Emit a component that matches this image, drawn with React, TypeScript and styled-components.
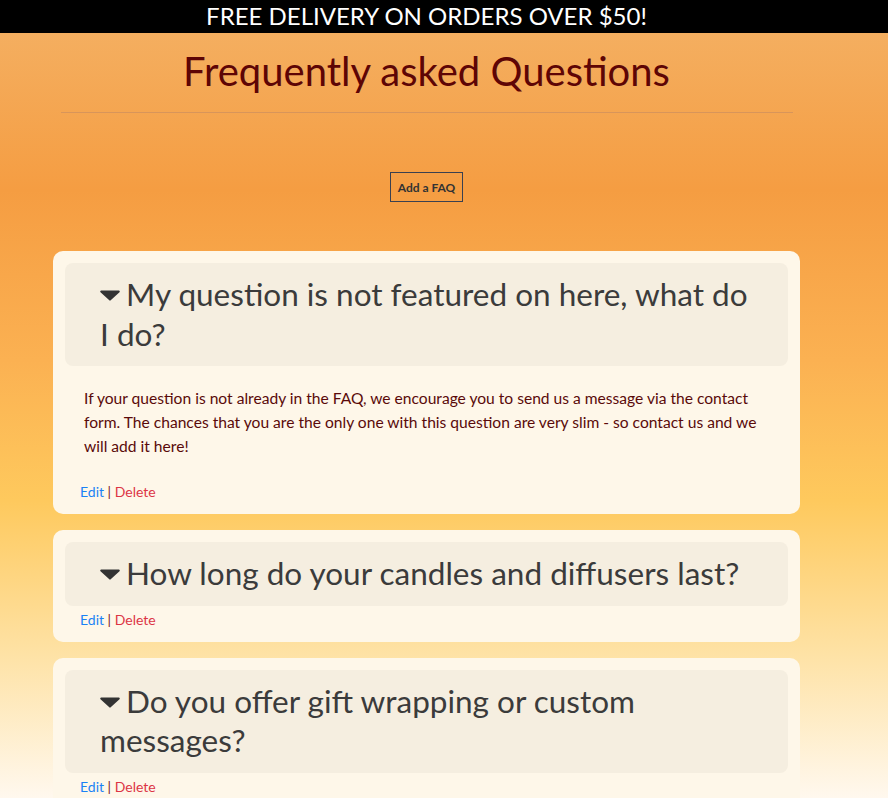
import React from "react";
import styled, { createGlobalStyle } from "styled-components";

const Global = createGlobalStyle`
  html, body { margin: 0; padding: 0; }
  body {
    font-family: Lato, "Noto Sans", sans-serif;
    min-height: 798px;
    background: linear-gradient(180deg, #f4b266 0px, #f59d42 190px, #fbb152 360px, #fec95d 500px, #fee3a8 660px, #fff8ee 798px) fixed;
  }
`;

const Banner = styled.div`
  background: #000;
  color: #fff;
  height: 33px;
  line-height: 31px;
  font-size: 24px;
  text-align: center;
  padding-right: 35px;
`;

const Main = styled.main`
  width: 853px;
  display: flex;
  flex-direction: column;
  align-items: center;
`;

const Title = styled.h1`
  margin: 14px 0 0;
  font-size: 40px;
  font-weight: 400;
  line-height: 48px;
  color: #5e0505;
`;

const Rule = styled.hr`
  align-self: stretch;
  margin: 17px 60px 0 61px;
  border: 0;
  border-top: 1px solid #d8955a;
  height: 0;
`;

const AddButton = styled.button`
  margin-top: 59px;
  width: 73px;
  height: 30px;
  padding: 0;
  border: 1px solid #3a4050;
  background: transparent;
  font-family: Lato, sans-serif;
  font-weight: 700;
  font-size: 12px;
  color: #333;
`;

const List = styled.div`
  margin-top: 49px;
  align-self: stretch;
  padding: 0 53px;
  display: flex;
  flex-direction: column;
  gap: 16px;
`;

const Card = styled.section`
  background: #fef7e9;
  border-radius: 10px;
  padding: 12px;
`;

const Question = styled.h2`
  margin: 0;
  background: #f5eee0;
  border-radius: 8px;
  padding: 12px 35px;
  font-size: 31.5px;
  font-weight: 400;
  line-height: 39.5px;
  color: #3b3b3b;
`;

const Caret = styled.svg`
  width: 20px;
  height: 11px;
  margin: 0 6px 5px 0;
  vertical-align: middle;
`;

const Answer = styled.p`
  margin: 0;
  padding: 20px 19px;
  font-size: 15.6px;
  line-height: 24px;
  color: #5a0a0a;
`;

const Actions = styled.div`
  padding: 3px 0 0 15px;
  font-size: 14px;
  line-height: 21px;
  color: #7a2020;
`;

const ActionLink = styled.a<{ $danger?: boolean }>`
  color: ${(p) => (p.$danger ? "#dc3545" : "#1a82f5")};
  text-decoration: none;
`;

const faqs = [
  {
    q: "My question is not featured on here, what do I do?",
    a: "If your question is not already in the FAQ, we encourage you to send us a message via the contact form. The chances that you are the only one with this question are very slim - so contact us and we will add it here!",
  },
  { q: "How long do your candles and diffusers last?" },
  { q: "Do you offer gift wrapping or custom messages?" },
];

export default function App() {
  return (
    <>
      <Global />
      <Banner>FREE DELIVERY ON ORDERS OVER $50!</Banner>
      <Main>
        <Title>Frequently asked Questions</Title>
        <Rule />
        <AddButton>Add a FAQ</AddButton>
        <List>
          {faqs.map((f) => (
            <Card key={f.q}>
              <Question>
                <Caret viewBox="0 0 20 11">
                  <path d="M1.2 0.5 H18.8 a1 1 0 0 1 0.7 1.7 L10.7 10.3 a1 1 0 0 1 -1.4 0 L0.5 2.2 A1 1 0 0 1 1.2 0.5 Z" fill="#333" />
                </Caret>
                {f.q}
              </Question>
              {f.a && <Answer>{f.a}</Answer>}
              <Actions>
                <ActionLink href="#">Edit</ActionLink> | <ActionLink href="#" $danger>Delete</ActionLink>
              </Actions>
            </Card>
          ))}
        </List>
      </Main>
    </>
  );
}
